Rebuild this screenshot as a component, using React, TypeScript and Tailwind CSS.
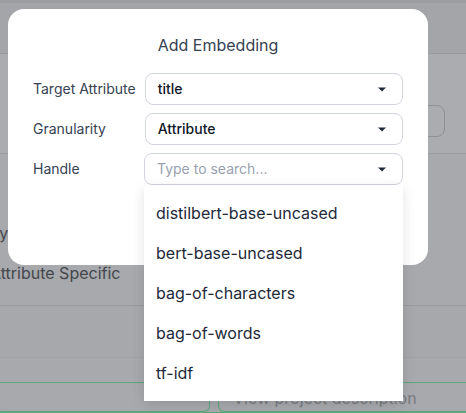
import React from 'react';

const handles = [
  'distilbert-base-uncased',
  'bert-base-uncased',
  'bag-of-characters',
  'bag-of-words',
  'tf-idf',
];

function Caret() {
  return (
    <svg width="8" height="5" viewBox="0 0 8 5" className="shrink-0">
      <path d="M0 0.5 L8 0.5 L4 4.5 Z" fill="#1f2937" />
    </svg>
  );
}

interface SelectBoxProps {
  value?: string;
  placeholder?: string;
}

function SelectBox({ value, placeholder }: SelectBoxProps) {
  return (
    <div className="h-8 w-[259px] rounded-lg border border-gray-300 bg-white pl-3 pr-4 flex items-center justify-between">
      {value ? (
        <span className="text-sm font-medium text-gray-900">{value}</span>
      ) : (
        <span className="text-sm text-gray-400">{placeholder}</span>
      )}
      <Caret />
    </div>
  );
}

function Row({ label, children }: { label: string; children: React.ReactNode }) {
  return (
    <div className="flex items-center">
      <span className="w-[112px] text-sm text-gray-700">{label}</span>
      {children}
    </div>
  );
}

export default function App() {
  return (
    <div className="relative w-[466px] h-[413px] overflow-hidden bg-[#a7a9ad] font-['Inter',sans-serif]">
      {/* dimmed page behind the modal */}
      <div className="flex flex-col h-full">
        <div className="h-[3px] bg-[#9b9da1]" />
        <div className="h-[51px] bg-[#a3a5a9] border-b border-[#989a9e]" />
        <div className="h-[100px] bg-[#aaacb0] border-b border-[#9a9ca0] flex justify-end items-start pt-[51px] pr-[21px]">
          <div className="h-8 w-[90px] rounded-lg border border-[#8e9094]" />
        </div>
        <div className="h-[152px] bg-[#a7a9ad] border-b border-[#9a9ca0] flex flex-col -ml-[10px] pt-[67px] gap-[16px] text-base text-[#45474c]">
          <span className="leading-6">Type</span>
          <span className="leading-6">Attribute Specific</span>
        </div>
        <div className="h-[52px] bg-[#a6a8ac] border-b border-[#a0a2a6]" />
        <div className="h-[24px] bg-[#a7a9ad]" />
        <div className="h-[31px] border-y border-[#5ea77a] flex gap-[8px] -ml-[4px]">
          <div className="w-[214px] h-full rounded-b-md border-x border-b border-[#5ea77a]" />
          <div className="flex-1 h-full rounded-b-md border-x border-b border-[#5ea77a] pl-[14px] pt-[3px] text-base leading-6 text-[#7a7d82] -mr-[10px]">
            View project description
          </div>
        </div>
      </div>

      {/* modal */}
      <div className="absolute left-[8px] top-[9px] w-[420px] h-[256px] rounded-2xl bg-white pt-6 px-[25px]">
        <h2 className="text-center text-base leading-6 text-gray-700">Add Embedding</h2>
        <div className="mt-4 flex flex-col gap-2">
          <Row label="Target Attribute">
            <SelectBox value="title" />
          </Row>
          <Row label="Granularity">
            <SelectBox value="Attribute" />
          </Row>
          <Row label="Handle">
            <div className="relative">
              <SelectBox placeholder="Type to search..." />
              <ul className="absolute left-0 top-8 w-[259px] bg-white py-2 shadow-[0_4px_12px_rgba(0,0,0,0.12)] z-10">
                {handles.map((h) => (
                  <li key={h} className="h-10 px-3 flex items-center text-base text-gray-800">
                    {h}
                  </li>
                ))}
              </ul>
            </div>
          </Row>
        </div>
      </div>
    </div>
  );
}
